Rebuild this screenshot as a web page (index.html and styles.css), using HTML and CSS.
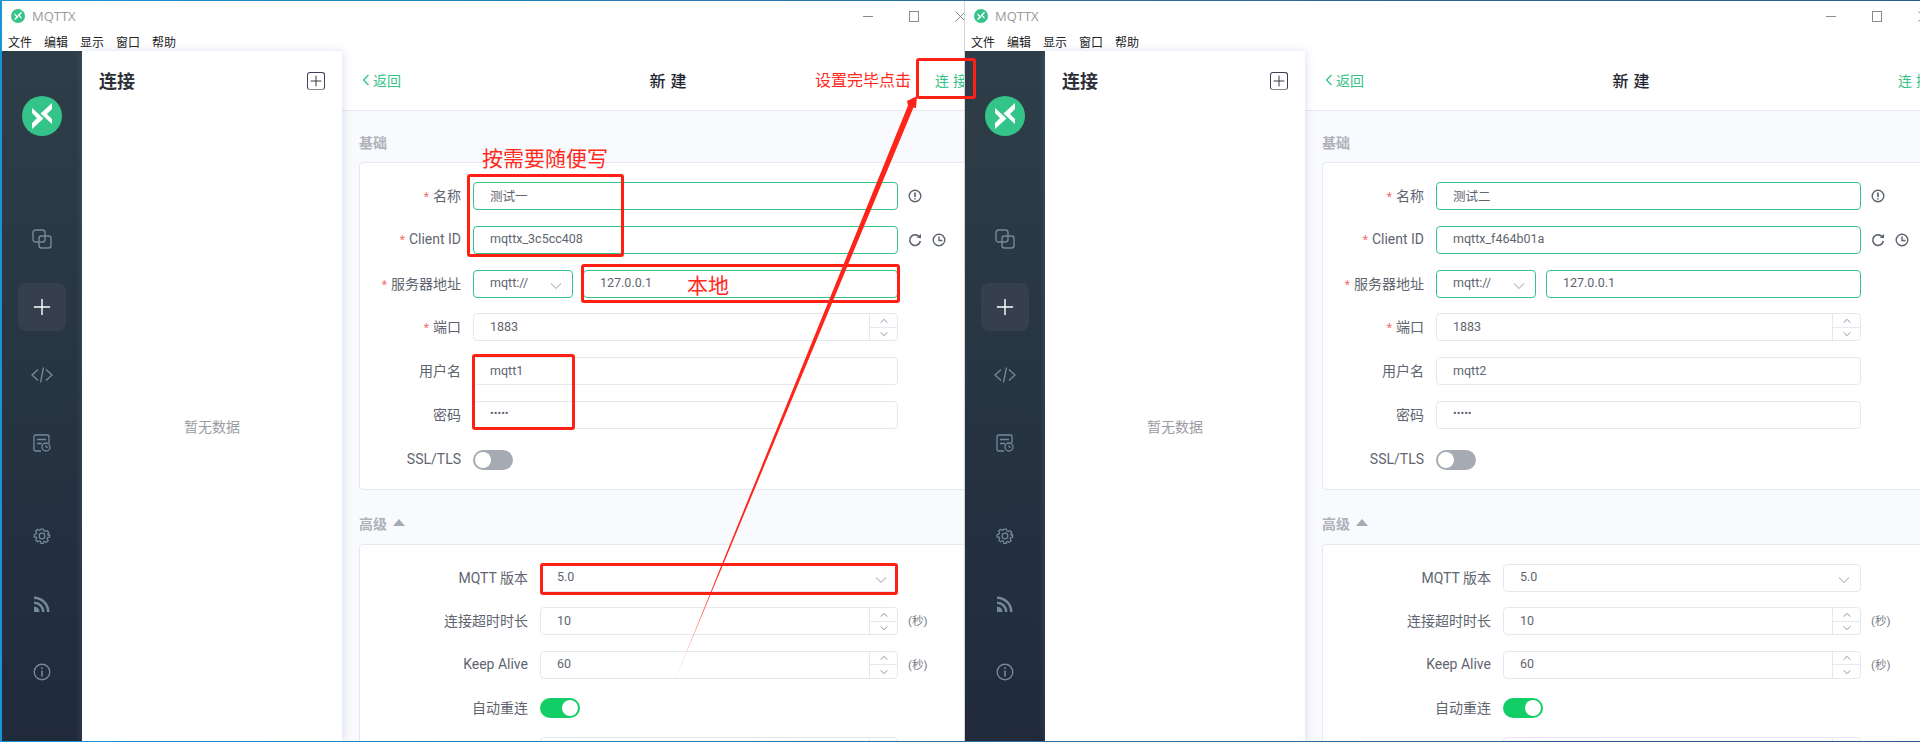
FILE: index.html
```html
<!DOCTYPE html>
<html lang="zh-CN">
<head>
    <meta charset="UTF-8">
    <meta name="viewport" content="width=device-width, initial-scale=1.0">
    <title>MQTTX</title>
    <link rel="stylesheet" href="styles.css">
</head>
<body>
    <!-- Iconos compartidos -->
    <svg class="defs" width="0" height="0">
        <symbol id="i-logo" viewBox="0 0 40 40">
            <circle cx="20" cy="20" r="20" fill="#34c388"/>
            <polygon fill="#fff" points="30,7 30,13 25,18 30,23 30,28 18.5,17.5"/>
            <polygon fill="#fff" points="10,33 10,27 15,22 10,17 10,12 21.5,22.5"/>
        </symbol>
        <symbol id="i-copy" viewBox="0 0 20 20">
            <rect x="1" y="1" width="12" height="12" rx="2.5" fill="none" stroke="currentColor" stroke-width="1.4"/>
            <rect x="7" y="7" width="12" height="12" rx="2.5" fill="none" stroke="currentColor" stroke-width="1.4"/>
        </symbol>
        <symbol id="i-plus" viewBox="0 0 20 20">
            <path d="M10 1v18M1 10h18" fill="none" stroke="currentColor" stroke-width="1.6"/>
        </symbol>
        <symbol id="i-code" viewBox="0 0 22 18">
            <path d="M7 3.5 1 9l6 5.5M15 3.5 21 9l-6 5.5M12.5 1.5 9.5 16.5" fill="none" stroke="currentColor" stroke-width="1.3"/>
        </symbol>
        <symbol id="i-log" viewBox="0 0 18 18">
            <path d="M8 17H2.5A1.5 1.5 0 0 1 1 15.500V2.500A1.500 1.500 0 0 1 2.500 1h12A1.500 1.500 0 0 1 16 2.500V9M4 5.500h9M4 9.500h5" fill="none" stroke="currentColor" stroke-width="1.3"/>
            <circle cx="13" cy="13" r="4" fill="none" stroke="currentColor" stroke-width="1.3"/>
            <path d="M13 11v2.300h2" fill="none" stroke="currentColor" stroke-width="1"/>
        </symbol>
        <symbol id="i-gear" viewBox="0 0 24 24">
            <path d="M10 2h4l.6 2.900 1.800.8 2.500-1.600 2.800 2.800-1.600 2.500.8 1.800L23 10v4l-2.900.6-.8 1.800 1.600 2.500-2.800 2.800-2.500-1.600-1.800.8L14 23h-4l-.6-2.900-1.800-.8-2.500 1.600-2.800-2.800 1.600-2.500-.8-1.800L0 14v-4l2.900-.6.8-1.800-1.600-2.500 2.800-2.800 2.500 1.600 1.800-.8z" transform="translate(1.500 1) scale(.9)" fill="none" stroke="currentColor" stroke-width="1.800" stroke-linejoin="round"/>
            <circle cx="12" cy="12" r="3.800" fill="none" stroke="currentColor" stroke-width="1.700"/>
        </symbol>
        <symbol id="i-rss" viewBox="0 0 16 16">
            <path d="M0 16V10.500A5.500 5.500 0 0 1 5.500 16z M0 8V5.500A10.500 10.500 0 0 1 10.500 16H8A8 8 0 0 0 0 8z M0 3V.5A15.500 15.500 0 0 1 15.500 16V16H13A13 13 0 0 0 0 3z" fill="currentColor"/>
        </symbol>
        <symbol id="i-info" viewBox="0 0 18 18">
            <circle cx="9" cy="9" r="7.800" fill="none" stroke="currentColor" stroke-width="1.400"/>
            <path d="M9 7.500v6M9 4.300v1.600" fill="none" stroke="currentColor" stroke-width="1.600"/>
        </symbol>
        <symbol id="i-alert" viewBox="0 0 14 14">
            <circle cx="7" cy="7" r="5.800" fill="none" stroke="currentColor" stroke-width="1.400"/>
            <path d="M7 3.500v4.500M7 9.300v1.300" fill="none" stroke="currentColor" stroke-width="1.700"/>
        </symbol>
        <symbol id="i-refresh" viewBox="0 0 14 14">
            <path d="M11.500 4.200A5.300 5.300 0 1 0 12.300 8" fill="none" stroke="currentColor" stroke-width="1.600"/>
            <polygon points="8.800,4.600 13,5.200 13,1" fill="currentColor"/>
        </symbol>
        <symbol id="i-clock" viewBox="0 0 14 14">
            <circle cx="7" cy="7" r="5.800" fill="none" stroke="currentColor" stroke-width="1.400"/>
            <path d="M7 3.500V7.500H10.500" fill="none" stroke="currentColor" stroke-width="1.400"/>
        </symbol>
        <symbol id="i-down" viewBox="0 0 12 8">
            <path d="M1 1.500 6 6.500 11 1.500" fill="none" stroke="currentColor" stroke-width="1.200"/>
        </symbol>
        <symbol id="i-up" viewBox="0 0 12 8">
            <path d="M1 6.500 6 1.500 11 6.500" fill="none" stroke="currentColor" stroke-width="1.200"/>
        </symbol>
        <symbol id="i-back" viewBox="0 0 8 12">
            <path d="M6.500 1 1.500 6 6.500 11" fill="none" stroke="currentColor" stroke-width="1.300"/>
        </symbol>
        <symbol id="i-close" viewBox="0 0 11 11">
            <path d="M.5.5l10 10M10.500.5l-10 10" fill="none" stroke="currentColor" stroke-width="1"/>
        </symbol>
    </svg>

    <div class="desktop">

        <!-- Ventana 1 -->
        <div class="window window-left">
            <div class="window-inner">
                <div class="titlebar">
                    <svg class="title-logo"><use href="#i-logo"/></svg>
                    <span class="title-text">MQTTX</span>
                    <div class="controls">
                        <span class="ctl"><span class="ctl-min"></span></span>
                        <span class="ctl"><span class="ctl-max"></span></span>
                        <span class="ctl"><svg class="ctl-close"><use href="#i-close"/></svg></span>
                    </div>
                </div>
                <div class="menubar">
                    <span>文件</span><span>编辑</span><span>显示</span><span>窗口</span><span>帮助</span>
                </div>
                <div class="app">
                    <nav class="sidebar">
                        <svg class="side-logo"><use href="#i-logo"/></svg>
                        <div class="side-group">
                            <div class="side-item"><svg class="ic-copy"><use href="#i-copy"/></svg></div>
                            <div class="side-item active"><svg class="ic-plus"><use href="#i-plus"/></svg></div>
                            <div class="side-item"><svg class="ic-code"><use href="#i-code"/></svg></div>
                            <div class="side-item"><svg class="ic-log"><use href="#i-log"/></svg></div>
                        </div>
                        <div class="side-group side-bottom">
                            <div class="side-item"><svg class="ic-gear"><use href="#i-gear"/></svg></div>
                            <div class="side-item"><svg class="ic-rss"><use href="#i-rss"/></svg></div>
                            <div class="side-item"><svg class="ic-info"><use href="#i-info"/></svg></div>
                        </div>
                    </nav>
                    <aside class="list">
                        <div class="list-head">
                            <h2>连接</h2>
                            <span class="add-btn"><svg><use href="#i-plus"/></svg></span>
                        </div>
                        <div class="empty">暂无数据</div>
                    </aside>
                    <main class="main">
                        <header class="head">
                            <span class="back"><svg><use href="#i-back"/></svg>返回</span>
                            <span class="head-title">新建</span>
                            <span class="head-connect">连接</span>
                        </header>
                        <div class="body">
                            <div class="sec-title">基础</div>
                            <section class="card card-basic">
                                <div class="row">
                                    <label class="label"><i>*</i>名称</label>
                                    <div class="field on">测试一</div>
                                    <div class="side-icons"><svg><use href="#i-alert"/></svg></div>
                                </div>
                                <div class="row">
                                    <label class="label"><i>*</i>Client ID</label>
                                    <div class="field on">mqttx_3c5cc408</div>
                                    <div class="side-icons"><svg><use href="#i-refresh"/></svg><svg><use href="#i-clock"/></svg></div>
                                </div>
                                <div class="row">
                                    <label class="label"><i>*</i>服务器地址</label>
                                    <div class="group">
                                        <div class="field on select">mqtt://<svg class="arrow"><use href="#i-down"/></svg></div>
                                        <div class="field on host">127.0.0.1</div>
                                    </div>
                                </div>
                                <div class="row">
                                    <label class="label"><i>*</i>端口</label>
                                    <div class="field num">1883
                                        <div class="stepper"><span><svg><use href="#i-up"/></svg></span><span><svg><use href="#i-down"/></svg></span></div>
                                    </div>
                                </div>
                                <div class="row">
                                    <label class="label">用户名</label>
                                    <div class="field">mqtt1</div>
                                </div>
                                <div class="row">
                                    <label class="label">密码</label>
                                    <div class="field"><span class="dots">•••••</span></div>
                                </div>
                                <div class="row row-switch">
                                    <label class="label">SSL/TLS</label>
                                    <span class="switch"></span>
                                </div>
                            </section>
                            <div class="sec-title sec-adv">高级<span class="caret"></span></div>
                            <section class="card card-adv">
                                <div class="row">
                                    <label class="label">MQTT 版本</label>
                                    <div class="field select">5.0<svg class="arrow"><use href="#i-down"/></svg></div>
                                </div>
                                <div class="row">
                                    <label class="label">连接超时时长</label>
                                    <div class="field num">10
                                        <div class="stepper"><span><svg><use href="#i-up"/></svg></span><span><svg><use href="#i-down"/></svg></span></div>
                                    </div>
                                    <span class="unit">(秒)</span>
                                </div>
                                <div class="row">
                                    <label class="label">Keep Alive</label>
                                    <div class="field num">60
                                        <div class="stepper"><span><svg><use href="#i-up"/></svg></span><span><svg><use href="#i-down"/></svg></span></div>
                                    </div>
                                    <span class="unit">(秒)</span>
                                </div>
                                <div class="row row-switch">
                                    <label class="label">自动重连</label>
                                    <span class="switch on"></span>
                                </div>
                                <div class="row">
                                    <label class="label"></label>
                                    <div class="field num">
                                        <div class="stepper"><span></span><span></span></div>
                                    </div>
                                </div>
                            </section>
                        </div>
                    </main>
                </div>
            </div>
        </div>

        <!-- Ventana 2 -->
        <div class="window window-right">
            <div class="window-inner">
                <div class="titlebar">
                    <svg class="title-logo"><use href="#i-logo"/></svg>
                    <span class="title-text">MQTTX</span>
                    <div class="controls">
                        <span class="ctl"><span class="ctl-min"></span></span>
                        <span class="ctl"><span class="ctl-max"></span></span>
                        <span class="ctl"><svg class="ctl-close"><use href="#i-close"/></svg></span>
                    </div>
                </div>
                <div class="menubar">
                    <span>文件</span><span>编辑</span><span>显示</span><span>窗口</span><span>帮助</span>
                </div>
                <div class="app">
                    <nav class="sidebar">
                        <svg class="side-logo"><use href="#i-logo"/></svg>
                        <div class="side-group">
                            <div class="side-item"><svg class="ic-copy"><use href="#i-copy"/></svg></div>
                            <div class="side-item active"><svg class="ic-plus"><use href="#i-plus"/></svg></div>
                            <div class="side-item"><svg class="ic-code"><use href="#i-code"/></svg></div>
                            <div class="side-item"><svg class="ic-log"><use href="#i-log"/></svg></div>
                        </div>
                        <div class="side-group side-bottom">
                            <div class="side-item"><svg class="ic-gear"><use href="#i-gear"/></svg></div>
                            <div class="side-item"><svg class="ic-rss"><use href="#i-rss"/></svg></div>
                            <div class="side-item"><svg class="ic-info"><use href="#i-info"/></svg></div>
                        </div>
                    </nav>
                    <aside class="list">
                        <div class="list-head">
                            <h2>连接</h2>
                            <span class="add-btn"><svg><use href="#i-plus"/></svg></span>
                        </div>
                        <div class="empty">暂无数据</div>
                    </aside>
                    <main class="main">
                        <header class="head">
                            <span class="back"><svg><use href="#i-back"/></svg>返回</span>
                            <span class="head-title">新建</span>
                            <span class="head-connect">连接</span>
                        </header>
                        <div class="body">
                            <div class="sec-title">基础</div>
                            <section class="card card-basic">
                                <div class="row">
                                    <label class="label"><i>*</i>名称</label>
                                    <div class="field on">测试二</div>
                                    <div class="side-icons"><svg><use href="#i-alert"/></svg></div>
                                </div>
                                <div class="row">
                                    <label class="label"><i>*</i>Client ID</label>
                                    <div class="field on">mqttx_f464b01a</div>
                                    <div class="side-icons"><svg><use href="#i-refresh"/></svg><svg><use href="#i-clock"/></svg></div>
                                </div>
                                <div class="row">
                                    <label class="label"><i>*</i>服务器地址</label>
                                    <div class="group">
                                        <div class="field on select">mqtt://<svg class="arrow"><use href="#i-down"/></svg></div>
                                        <div class="field on host">127.0.0.1</div>
                                    </div>
                                </div>
                                <div class="row">
                                    <label class="label"><i>*</i>端口</label>
                                    <div class="field num">1883
                                        <div class="stepper"><span><svg><use href="#i-up"/></svg></span><span><svg><use href="#i-down"/></svg></span></div>
                                    </div>
                                </div>
                                <div class="row">
                                    <label class="label">用户名</label>
                                    <div class="field">mqtt2</div>
                                </div>
                                <div class="row">
                                    <label class="label">密码</label>
                                    <div class="field"><span class="dots">•••••</span></div>
                                </div>
                                <div class="row row-switch">
                                    <label class="label">SSL/TLS</label>
                                    <span class="switch"></span>
                                </div>
                            </section>
                            <div class="sec-title sec-adv">高级<span class="caret"></span></div>
                            <section class="card card-adv">
                                <div class="row">
                                    <label class="label">MQTT 版本</label>
                                    <div class="field select">5.0<svg class="arrow"><use href="#i-down"/></svg></div>
                                </div>
                                <div class="row">
                                    <label class="label">连接超时时长</label>
                                    <div class="field num">10
                                        <div class="stepper"><span><svg><use href="#i-up"/></svg></span><span><svg><use href="#i-down"/></svg></span></div>
                                    </div>
                                    <span class="unit">(秒)</span>
                                </div>
                                <div class="row">
                                    <label class="label">Keep Alive</label>
                                    <div class="field num">60
                                        <div class="stepper"><span><svg><use href="#i-up"/></svg></span><span><svg><use href="#i-down"/></svg></span></div>
                                    </div>
                                    <span class="unit">(秒)</span>
                                </div>
                                <div class="row row-switch">
                                    <label class="label">自动重连</label>
                                    <span class="switch on"></span>
                                </div>
                                <div class="row">
                                    <label class="label"></label>
                                    <div class="field num">
                                        <div class="stepper"><span></span><span></span></div>
                                    </div>
                                </div>
                            </section>
                        </div>
                    </main>
                </div>
            </div>
        </div>

        <!-- Anotaciones rojas encima de la captura -->
        <div class="mark mark-name"></div>
        <div class="mark mark-host"></div>
        <div class="mark mark-user"></div>
        <div class="mark mark-version"></div>
        <div class="mark mark-connect"></div>
        <span class="note note-name">按需要随便写</span>
        <span class="note note-host">本地</span>
        <span class="note note-connect">设置完毕点击</span>
        <svg class="arrow-note" width="1920" height="742">
            <defs>
                <linearGradient id="fade" gradientUnits="userSpaceOnUse" x1="668" y1="697" x2="722" y2="570">
                    <stop offset="0" stop-color="#ff2419" stop-opacity="0"/>
                    <stop offset="1" stop-color="#ff2419"/>
                </linearGradient>
            </defs>
            <polygon fill="url(#fade)" points="917,96 916,108 913.500,107.500 668,697 908,105.500 907,101"/>
        </svg>
    </div>
</body>
</html>
```

FILE: styles.css
```css
* {
    margin: 0;
    padding: 0;
    box-sizing: border-box;
}

body {
    width: 1920px;
    height: 742px;
    overflow: hidden;
    font-family: Roboto, "Noto Sans CJK SC", sans-serif;
    color: #5f6570;
}

.defs {
    position: absolute;
}

svg {
    display: block;
}

.desktop {
    position: relative;
    display: flex;
    height: 742px;
    padding: 1px 0 1px 2px;
    background: linear-gradient(90deg, #1a94d6 0%, #2b6ea0 50%, #2b5a90 100%);
}

.window {
    flex: none;
    height: 740px;
    overflow: hidden;
    background: #fff;
}

.window-left {
    width: 962px;
}

.window-right {
    width: 956px;
    border-left: 1px solid #d4d4d4;
}

.window-inner {
    width: 992px;
    height: 740px;
    display: flex;
    flex-direction: column;
}

/* barra de titulo */
.titlebar {
    flex: none;
    height: 30px;
    display: flex;
    align-items: center;
    padding-left: 9px;
}

.title-logo {
    width: 14px;
    height: 14px;
}

.title-text {
    margin-left: 7px;
    font-family: "Open Sans", sans-serif;
    font-size: 13px;
    color: #9a9a9a;
}

.controls {
    margin-left: auto;
    margin-right: 11px;
    display: flex;
}

.ctl {
    width: 46px;
    height: 30px;
    display: flex;
    align-items: center;
    justify-content: center;
}

.ctl-min {
    width: 10px;
    height: 1px;
    background: #8a8a8a;
}

.ctl-max {
    width: 10px;
    height: 11px;
    border: 1px solid #8a8a8a;
}

.ctl-close {
    width: 11px;
    height: 11px;
    color: #8a8a8a;
}

.menubar {
    flex: none;
    height: 20px;
    display: flex;
    align-items: center;
    gap: 12px;
    padding-left: 6px;
    font-size: 12px;
    color: #222;
}

.app {
    flex: 1;
    min-height: 0;
    display: flex;
}

/* barra lateral */
.sidebar {
    flex: none;
    width: 80px;
    display: flex;
    flex-direction: column;
    align-items: center;
    background: linear-gradient(180deg, #2e3e48 0%, #202a3b 100%);
    color: #76899a;
}

.side-logo {
    flex: none;
    width: 40px;
    height: 40px;
    margin-top: 45px;
}

.side-group {
    margin-top: 79px;
    display: flex;
    flex-direction: column;
    gap: 20px;
}

.side-bottom {
    margin-top: 45px;
}

.side-item {
    width: 48px;
    height: 48px;
    border-radius: 8px;
    display: flex;
    align-items: center;
    justify-content: center;
}

.side-item.active {
    background: #363f4e;
    color: #fff;
}

.ic-copy { width: 20px; height: 20px; }
.ic-plus { width: 18px; height: 18px; }
.ic-code { width: 22px; height: 18px; }
.ic-log { width: 18px; height: 18px; }
.ic-gear { width: 18px; height: 18px; }
.ic-rss { width: 16px; height: 16px; }
.ic-info { width: 18px; height: 18px; }

/* lista de conexiones */
.list {
    position: relative;
    z-index: 1;
    flex: none;
    width: 260px;
    display: flex;
    flex-direction: column;
    background: #fff;
    box-shadow: 1px 0 8px rgba(150, 160, 210, 0.3);
}

.list-head {
    flex: none;
    height: 60px;
    display: flex;
    align-items: center;
    justify-content: space-between;
    padding: 0 17px;
}

.list-head h2 {
    padding-bottom: 2px;
    font-size: 18px;
    font-weight: 700;
    color: #2c3038;
}

.add-btn {
    width: 18px;
    height: 18px;
    border: 1px solid #3a3f58;
    border-bottom-color: #888;
    border-radius: 3px;
    display: flex;
    align-items: center;
    justify-content: center;
    color: #333;
}

.add-btn svg {
    width: 12px;
    height: 12px;
}

.empty {
    flex: 1;
    display: flex;
    align-items: center;
    justify-content: center;
    font-size: 14px;
    color: #9a9ca3;
}

/* panel principal */
.main {
    flex: 1;
    min-width: 0;
    display: flex;
    flex-direction: column;
    background: #f9fafd;
}

.head {
    flex: none;
    height: 60px;
    display: grid;
    grid-template-columns: 1fr auto 1fr;
    align-items: center;
    padding: 0 23px 2px 20px;
    background: #fff;
    border-bottom: 1px solid #e6e8f1;
}

.back {
    display: flex;
    align-items: center;
    gap: 3px;
    font-size: 14px;
    color: #34c388;
}

.back svg {
    width: 8px;
    height: 12px;
}

.head-title {
    margin-left: 3px;
    margin-right: -5px;
    font-size: 16px;
    font-weight: 500;
    letter-spacing: 5px;
    color: #22262e;
}

.head-connect {
    justify-self: end;
    font-size: 14px;
    letter-spacing: 4px;
    color: #34c388;
}

.body {
    flex: 1;
    min-height: 0;
    padding: 21px 0 0 17px;
}

.sec-title {
    display: flex;
    align-items: center;
    height: 20px;
    margin-bottom: 10px;
    font-size: 14px;
    font-weight: 700;
    color: #aeb2ba;
}

.sec-adv {
    margin-top: 24px;
    padding-bottom: 2px;
}

.caret {
    width: 0;
    height: 0;
    margin-left: 6px;
    border-left: 6px solid transparent;
    border-right: 6px solid transparent;
    border-bottom: 7px solid #a6aab3;
}

.card {
    width: 620px;
    padding: 19px 0 14px;
    background: #fff;
    border: 1px solid #e6e8f1;
    border-radius: 4px;
    display: flex;
    flex-direction: column;
}

.card-basic {
    gap: 15.8px;
}

.card-adv {
    gap: 15.5px;
}

.row {
    flex: none;
    min-height: 28px;
    display: flex;
    align-items: center;
}

.row-switch {
    height: 30px;
}

.card-adv .row-switch {
    height: 28px;
    margin-bottom: -1px;
}

.label {
    flex: none;
    margin-right: 12px;
    padding-bottom: 2px;
    text-align: right;
    font-size: 14px;
    color: #5f6570;
}

.card-basic .label {
    width: 101px;
}

.card-adv .label {
    width: 168px;
}

.label i {
    margin-right: 4px;
    font-style: normal;
    font-size: 12px;
    color: #f56c6c;
}

.field {
    position: relative;
    flex: none;
    width: 425px;
    height: 28px;
    padding: 0 16px 2px;
    display: flex;
    align-items: center;
    font-size: 12.5px;
    color: #5f6570;
    background: #fff;
    border: 1px solid #e6e8f1;
    border-radius: 4px;
}

.field.on {
    border-color: #34c388;
}

.card-adv .field {
    width: 358px;
}

.group {
    display: flex;
    gap: 10px;
}

.field.select {
    width: 100px;
}

.card-adv .field.select {
    width: 358px;
}

.field.host {
    width: 315px;
}

.arrow {
    position: absolute;
    right: 10px;
    top: 11px;
    width: 12px;
    height: 8px;
    color: #c0c4cc;
}

.stepper {
    position: absolute;
    top: 0;
    right: 0;
    bottom: 0;
    width: 28px;
    display: flex;
    flex-direction: column;
    border-left: 1px solid #e6e8f1;
}

.stepper span {
    flex: 1;
    display: flex;
    align-items: center;
    justify-content: center;
    color: #6d7380;
}

.stepper span + span {
    border-top: 1px solid #e6e8f1;
}

.stepper svg {
    width: 8px;
    height: 6px;
}

.dots {
    font-size: 11px;
    letter-spacing: 0;
}

.side-icons {
    display: flex;
    gap: 10px;
    margin-left: 10px;
    color: #5d6470;
}

.side-icons svg {
    width: 14px;
    height: 14px;
}

.unit {
    margin-left: 10px;
    padding-bottom: 2px;
    font-size: 11.5px;
    color: #777c86;
}

.switch {
    position: relative;
    flex: none;
    width: 40px;
    height: 20px;
    border-radius: 10px;
    background: #a6abb3;
}

.switch::after {
    content: "";
    position: absolute;
    top: 2px;
    left: 2px;
    width: 16px;
    height: 16px;
    border-radius: 50%;
    background: #fff;
}

.switch.on {
    background: #13ce66;
}

.switch.on::after {
    left: 22px;
}

/* anotaciones */
.mark {
    position: absolute;
    border: 3px solid #ff1f14;
    border-radius: 3px;
}

.mark-name { left: 467px; top: 174px; width: 157px; height: 83px; }
.mark-host { left: 581px; top: 264px; width: 319px; height: 39px; }
.mark-user { left: 472px; top: 354px; width: 103px; height: 76px; }
.mark-version { left: 540px; top: 563px; width: 358px; height: 32px; }
.mark-connect { left: 916px; top: 58px; width: 60px; height: 41px; }

.note {
    position: absolute;
    font-family: "Noto Sans CJK SC", sans-serif;
    color: #ff2a1c;
    line-height: 1;
}

.note-name { left: 482px; top: 147px; font-size: 21px; }
.note-host { left: 687px; top: 274px; font-size: 21px; }
.note-connect { left: 815px; top: 71px; font-size: 16px; }

.arrow-note {
    position: absolute;
    left: 0;
    top: 0;
    pointer-events: none;
}
```
